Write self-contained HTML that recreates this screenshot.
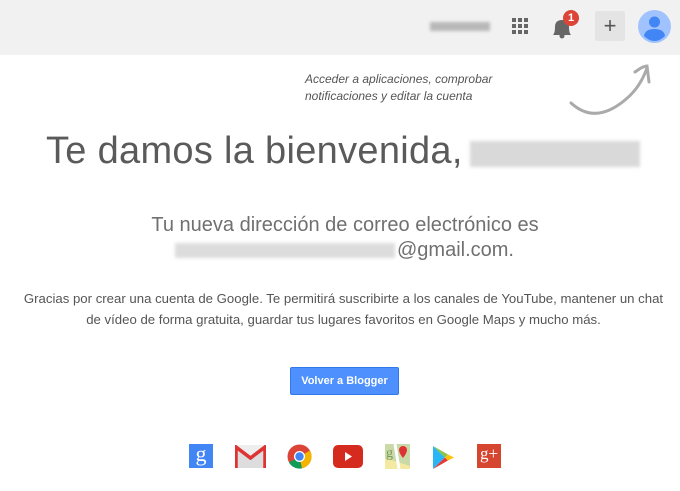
<!DOCTYPE html>
<html><head><meta charset="utf-8"><style>
body{margin:0;width:680px;height:491px;background:#fff;font-family:"Liberation Sans",Arial,sans-serif;position:relative;overflow:hidden}
.hdr{position:absolute;left:0;top:0;width:680px;height:55px;background:#f1f1f1}
.abs{position:absolute}
.blur{background:#bbb;filter:blur(1.5px);opacity:.8}
</style></head><body>
<div class="hdr">
 <div class="abs blur" style="left:430px;top:22px;width:60px;height:9px;background:#aaa"></div>
 <svg class="abs" style="left:512px;top:18px" width="16" height="16" viewBox="0 0 16 16" fill="#666">
  <rect x="0" y="0" width="4" height="4"/><rect x="6" y="0" width="4" height="4"/><rect x="12" y="0" width="4" height="4"/>
  <rect x="0" y="6" width="4" height="4"/><rect x="6" y="6" width="4" height="4"/><rect x="12" y="6" width="4" height="4"/>
  <rect x="0" y="12" width="4" height="4"/><rect x="6" y="12" width="4" height="4"/><rect x="12" y="12" width="4" height="4"/>
 </svg>
 <svg class="abs" style="left:551px;top:15px" width="22" height="24" viewBox="0 0 22 24" fill="#666">
  <path d="M2 20 Q4 18 4 12 Q4 5 11 5 Q18 5 18 12 Q18 18 20 20 Z"/><circle cx="11" cy="21" r="2.5"/>
 </svg>
 <div class="abs" style="left:563px;top:10px;width:16px;height:16px;border-radius:50%;background:#db4437;color:#fff;font-size:11px;font-weight:bold;text-align:center;line-height:16px">1</div>
 <div class="abs" style="left:595px;top:11px;width:30px;height:30px;background:#e4e4e4;border-radius:2px;color:#555;font-size:22px;text-align:center;line-height:29px">+</div>
 <svg class="abs" style="left:638px;top:10px" width="33" height="33" viewBox="0 0 33 33">
  <circle cx="16.5" cy="16.5" r="16.5" fill="#a0c3ff"/>
  <circle cx="16.5" cy="12" r="5.5" fill="#4285f4"/>
  <path d="M6 26 Q7 19 16.5 19 Q26 19 27 26 Q22 31 16.5 31 Q11 31 6 26Z" fill="#4285f4"/>
 </svg>
</div>
<div class="abs" style="left:305px;top:71px;font-size:12px;font-style:italic;color:#555;line-height:17px">Acceder a aplicaciones, comprobar<br>notificaciones y editar la cuenta</div>
<svg class="abs" style="left:565px;top:60px" width="95" height="60" viewBox="0 0 95 60" fill="none" stroke="#aaa" stroke-width="3" stroke-linecap="round">
 <path d="M6 43 Q30 65 60 40 Q75 28 82 8"/><path d="M70 12 Q78 6 82 6 Q83 14 84 22"/>
</svg>
<div class="abs" style="left:46px;top:130px;font-size:38px;color:#5a5a5a;letter-spacing:0.3px">Te damos la bienvenida,</div>
<div class="abs blur" style="left:470px;top:141px;width:170px;height:26px;background:#d0d0d0"></div>
<div class="abs" style="left:0;top:214px;width:690px;text-align:center;font-size:20px;color:#707070">Tu nueva dirección de correo electrónico es</div>
<div class="abs blur" style="left:175px;top:243px;width:220px;height:15px;background:#d4d4d4"></div>
<div class="abs" style="left:397px;top:239px;font-size:20px;color:#707070">@gmail.com.</div>
<div class="abs" style="left:0;top:288px;width:687px;text-align:center;font-size:13.2px;color:#555;line-height:21px">Gracias por crear una cuenta de Google. Te permitirá suscribirte a los canales de YouTube, mantener un chat<br>de vídeo de forma gratuita, guardar tus lugares favoritos en Google Maps y mucho más.</div>
<div class="abs" style="left:290px;top:367px;width:109px;height:28px;background:#4d90fe;border:1px solid #3079ed;box-sizing:border-box;border-radius:2px;color:#fff;font-weight:bold;font-size:11px;text-align:center;line-height:26px">Volver a Blogger</div>
<div class="abs" style="left:189px;top:444px;width:24px;height:24px;background:#4285f4;color:#fff;font-family:'Liberation Serif',serif;font-size:22px;text-align:center;line-height:20px">g</div>
<svg class="abs" style="left:235px;top:445px" width="31" height="23" viewBox="0 0 31 23">
 <rect width="31" height="23" fill="#eee"/><path d="M0 0 L15.5 12 L31 0 L31 23 L0 23Z" fill="#ddd"/>
 <path d="M1 23 V2 L15.5 13 L30 2 V23" fill="none" stroke="#d33" stroke-width="3.5"/>
</svg>
<svg class="abs" style="left:287px;top:444px" width="25" height="25" viewBox="0 0 25 25">
 <circle cx="12.5" cy="12.5" r="12" fill="#db4437"/>
 <path d="M12.5 12.5 L2 18.5 A12 12 0 0 0 15 24.3Z" fill="#0f9d58"/>
 <path d="M12.5 12.5 L15 24.3 A12 12 0 0 0 23 6.5Z" fill="#f4b400"/>
 <circle cx="12.5" cy="12.5" r="5.5" fill="#fff"/><circle cx="12.5" cy="12.5" r="4.2" fill="#4285f4"/>
</svg>
<svg class="abs" style="left:333px;top:445px" width="30" height="23" viewBox="0 0 30 23">
 <rect width="30" height="23" rx="5" fill="#d52a1e"/><path d="M12 7 L19 11.5 L12 16Z" fill="#fff"/>
</svg>
<svg class="abs" style="left:385px;top:444px" width="25" height="25" viewBox="0 0 25 25">
 <rect width="25" height="25" fill="#c9d9a8"/><path d="M0 14 L25 22 V25 H0Z" fill="#f3e9a0"/><path d="M10 0 L14 25" stroke="#fff" stroke-width="3"/>
 <text x="1" y="13" font-size="14" fill="#7a9a55" font-family="Liberation Serif">g</text>
 <path d="M18 2 a4 4 0 0 1 4 4 q0 3 -4 8 q-4 -5 -4 -8 a4 4 0 0 1 4 -4z" fill="#d33"/>
</svg>
<svg class="abs" style="left:431px;top:445px" width="24" height="25" viewBox="0 0 24 25">
 <path d="M2 1 L14 12.5 L2 24Z" fill="#29b6f6"/><path d="M2 1 L17 9.5 L14 12.5Z" fill="#8bc34a"/>
 <path d="M2 24 L17 15.5 L14 12.5Z" fill="#e53935"/><path d="M17 9.5 L23 12.5 L17 15.5 L14 12.5Z" fill="#ffc107"/>
</svg>
<div class="abs" style="left:477px;top:444px;width:24px;height:24px;background:#d6452f;color:#fff;font-family:'Liberation Serif',serif;font-size:17px;text-align:center;line-height:20px">g+</div>
</body></html>
